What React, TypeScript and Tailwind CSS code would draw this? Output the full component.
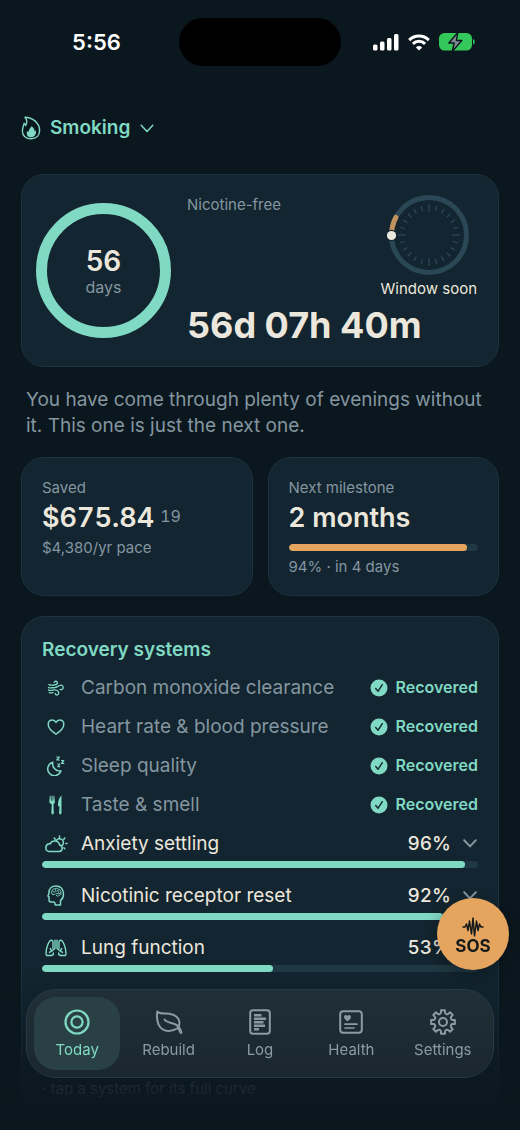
import React from "react";
import clsx from "clsx";

type IconProps = { className?: string };

const stroke = {
  fill: "none",
  stroke: "currentColor",
  strokeLinecap: "round" as const,
  strokeLinejoin: "round" as const,
};

function FlameIcon({ className }: IconProps) {
  return (
    <svg viewBox="0 0 20 24" className={className} {...stroke} strokeWidth="1.4">
      <path d="M4 1.2C11 1.2 18.6 6.6 18.6 14.6c0 5-3.4 8.2-8.6 8.2-5 0-8.6-3-8.6-7.6 0-3.400 1-5.600 1.800-7.900.7.6 1.200 1.300 1.500 2.300C6 7.200 6.200 3.800 4 1.200z" />
      <path d="M10.400 10.200c2.200 1.400 3.300 3 3.100 5 .4-.2.700-.7.900-1.200 1.600 3.400-.2 7.200-4.400 7.200-3.600 0-5.200-3.100-3.800-6.300.3.600.7 1 1.200 1.200.2-2.300 1.900-3.900 3-5.900z" fill="currentColor" stroke="none" />
    </svg>
  );
}

function Chevron({ className, width }: IconProps & { width: number }) {
  return (
    <svg viewBox="0 0 14 9" className={className} {...stroke} strokeWidth={width}>
      <path d="M1.200 1.200L7 7.400l5.800-6.200" />
    </svg>
  );
}

function WindIcon({ className }: IconProps) {
  return (
    <svg viewBox="0 0 20 18" className={className} {...stroke} strokeWidth="1.500">
      <path d="M2 5.200c2 1 4 .4 6 .4 2.200 0 3.600-.9 3.600-2.400a1.900 1.900 0 0 0-3.700-.5" />
      <path d="M1.500 8.500c2.500 1 4.500 0 7 0 3 0 4-2.500 7-2.700a2.500 2.500 0 1 1-.9 4.800" />
      <path d="M1.500 11.300c2.500 1 5-.300 7.500-.1 2.200.2 4 1.700 4 3.600a2 2 0 0 1-4 .2" />
      <path d="M2.500 14.200c1.500.6 2.700.2 4-.1" />
    </svg>
  );
}

function HeartIcon({ className }: IconProps) {
  return (
    <svg viewBox="0 0 18 18" className={className} {...stroke} strokeWidth="1.500">
      <path d="M9 16.200C4.500 13.300 1.200 10 1.200 6.300 1.200 3.700 3 1.900 5.200 1.900c1.700 0 3 .9 3.800 2.400.8-1.500 2.100-2.400 3.800-2.400 2.200 0 4 1.800 4 4.400 0 3.700-3.300 7-7.800 9.900z" />
    </svg>
  );
}

function SleepIcon({ className }: IconProps) {
  return (
    <svg viewBox="0 0 18 20" className={className} {...stroke} strokeWidth="1.500">
      <path d="M5.800 6.300A6.800 6.800 0 1 0 14 15 7.200 7.200 0 0 1 5.800 6.300z" />
      <path d="M9.800 1h2.500L9.800 4h2.500M14.500 4.500h2.300l-2.300 2.800h2.300M10.800 8h2l-2 2.600h2" strokeWidth="1.200" />
    </svg>
  );
}

function ForkKnifeIcon({ className }: IconProps) {
  return (
    <svg viewBox="0 0 14 20" className={className} fill="currentColor">
      <path d="M.8.700h.8l.3 5h.6l.1-5h.9l.1 5h.6l.3-5h.8l.6 5.900c.1 1.500-.6 2.300-1.400 2.700l.3 8.700c0 .8-.5 1.400-1.200 1.400s-1.200-.6-1.200-1.400l.3-8.700C1.600 8.900.200 8.100.3 6.600z" />
      <path d="M12.500.600v17.400c0 .8-.5 1.400-1.200 1.400s-1.200-.6-1.200-1.400l.3-6.300c-.9-.3-1.500-.8-1.500-1.600C9 6.500 10.100 2.400 12.500.600z" />
    </svg>
  );
}

function CloudSunIcon({ className }: IconProps) {
  return (
    <svg viewBox="0 0 24 18" className={className} {...stroke} strokeWidth="1.500">
      <path d="M5 16.500h10.200a3.300 3.300 0 0 0 .4-6.500 5 5 0 0 0-9.400-1.200A3.900 3.900 0 0 0 5 16.500z" />
      <path d="M12.200 5.900a3.800 3.800 0 1 1 5.900 4.500" />
      <path d="M15.500 1v1.500M10.200 3.100l1 1M20.800 3.100l-1 1M21.800 8.500H23M19.900 12.800l.9.900" />
    </svg>
  );
}

function BrainHeadIcon({ className }: IconProps) {
  return (
    <svg viewBox="0 0 18 21" className={className} {...stroke} strokeWidth="1.500">
      <path d="M13.500 20v-4.400c2-1.600 3-3.800 3-6.700C16.500 4 13.300.9 9 .9c-4.400 0-7 2.700-7 6.500 0 1-.1 1.600-.9 3.100-.3.700 0 1.100.9 1.200v3.400c0 1.300.6 1.800 1.700 1.800H6.500c.8 0 1.200.3 1.400 1L8.200 20z" />
      <path d="M5.300 9.200C3.900 8.500 4 6.400 5.300 5.900 5.300 4.200 7 3.200 8.200 3.900c1.200-1.100 3.300-.6 3.600.7 1.600 0 2.500 1.500 2 2.800.7 1.200-.1 2.900-1.600 2.900-.7 1-2.200 1-2.900.1M5.300 9.200c1.100.8 2.300.6 3-.3M5.500 6.200c.6.900 1.800 1 2.700.4.800-.6.900-1.500.2-2.400M9.500 8.700c1.700.1 2.400-.8 2.200-1.900M11.500 4.900c-.8.100-1.300.6-1.400 1.300M11.600 8.800c.9-.1 1.500-.4 2-.9" strokeWidth="1" />
    </svg>
  );
}

function LungsIcon({ className }: IconProps) {
  return (
    <svg viewBox="0 0 22 18" className={className} {...stroke} strokeWidth="1.400">
      <path d="M10 1.200v8.300L6.800 12M12 1.200v8.300l3.200 2.500" />
      <path d="M8 9.500V3.300C8 2 7.300 1.200 6.300 1.200 4 1.200 1 9 1 14.500c0 1.600.6 2.200 2 2h3.200c1.500 0 2.200-.9 2.200-2.500" />
      <path d="M14 9.500V3.300c0-1.300.7-2.100 1.700-2.100C18 1.200 21 9 21 14.500c0 1.600-.6 2.200-2 2h-3.200c-1.500 0-2.200-.9-2.200-2.500" />
      <path d="M5.200 9.500l1.600 2.500-2.300 1.400M16.800 9.500l-1.600 2.500 2.300 1.400" />
    </svg>
  );
}

function CheckBadge() {
  return (
    <svg viewBox="0 0 18 18" className="size-[18px]" aria-hidden="true">
      <circle cx="9" cy="9" r="8.500" fill="#80d9c3" />
      <path d="M5.700 9.500l2.400 2.700 4.200-6.500" fill="none" stroke="#132530" strokeWidth="1.400" strokeLinecap="round" strokeLinejoin="round" />
    </svg>
  );
}

function TargetIcon({ className }: IconProps) {
  return (
    <svg viewBox="0 0 26 26" className={className} {...stroke} strokeWidth="2.200">
      <circle cx="13" cy="13" r="11.500" />
      <circle cx="13" cy="13" r="5.600" />
    </svg>
  );
}

function LeafIcon({ className }: IconProps) {
  return (
    <svg viewBox="0 0 28 26" className={className} {...stroke} strokeWidth="2">
      <path d="M2.200 2.500c2.500 3 6.800 1.600 12 2.200 6 .7 10.300 4.500 10.300 9 0 2.200-.7 4-1.800 5.300-6.200 4.500-13.400 4-17.500-.8C1.800 14 1.600 8 2.200 2.500z" />
      <path d="M9.500 10.500c2.500 3.300 6.500 3 10 4.500 3.200 1.200 5.500 4.200 6.500 8" />
      <path d="M24 19.500l2 4" strokeWidth="2.800" />
    </svg>
  );
}

function LogIcon({ className }: IconProps) {
  return (
    <svg viewBox="0 0 22 26" className={className} {...stroke} strokeWidth="2">
      <rect x="1.200" y="1.200" width="19.600" height="23.600" rx="2.800" />
      <path d="M5 6.200h7.500M5 9.700h12M5 13.200h9.500M5 16.700h11M5 20.200h5" strokeWidth="2.500" strokeLinecap="butt" />
    </svg>
  );
}

function HealthIcon({ className }: IconProps) {
  return (
    <svg viewBox="0 0 24 24" className={className} {...stroke} strokeWidth="2">
      <rect x="1.200" y="1.200" width="21.600" height="21.600" rx="3" />
      <path d="M8.500 11.200C6.300 9.600 5 8.300 5 6.900c0-2.100 2.500-2.600 3.500-.9 1-1.700 3.500-1.200 3.500.9 0 1.400-1.300 2.700-3.500 4.300z" fill="currentColor" stroke="none" />
      <path d="M6 14.200h12M6 18h9" strokeWidth="1.700" />
    </svg>
  );
}

// Eight rounded teeth around a small hub
function gearPath() {
  const points: string[] = [];
  const teeth = 8;
  for (let i = 0; i < teeth; i++) {
    const base = (i * 2 * Math.PI) / teeth - Math.PI / 2;
    const steps: [number, number][] = [[-0.22, 9.6], [-0.16, 12], [0.16, 12], [0.22, 9.6]];
    steps.forEach(([offset, r]) => {
      const x = (13 + r * Math.cos(base + offset)).toFixed(2);
      const y = (13 + r * Math.sin(base + offset)).toFixed(2);
      points.push(`${x} ${y}`);
    });
  }
  let d = `M${points[0]}`;
  for (let i = 1; i < points.length; i++) {
    d += i % 4 === 0 ? `A2 2 0 0 0 ${points[i]}` : `L${points[i]}`;
  }
  return d + `A2 2 0 0 0 ${points[0]}Z`;
}

function GearIcon({ className }: IconProps) {
  return (
    <svg viewBox="0 0 26 26" className={className} {...stroke} strokeWidth="2">
      <path d={gearPath()} />
      <circle cx="13" cy="13" r="4" />
    </svg>
  );
}

function StatusBar() {
  return (
    <div className="grid grid-cols-[1fr_162px_1fr] items-center pt-[18px]">
      <span className="pl-[14px] text-center text-[22px] leading-6 font-semibold text-white">5:56</span>
      <div className="h-12 rounded-full bg-black" />
      <div className="flex items-center gap-[9px] pl-8">
        <svg viewBox="0 0 26 17" className="h-[17px] w-[26px]" fill="white">
          <rect x="0" y="10.500" width="4.500" height="6" rx="1.500" />
          <rect x="7" y="7.500" width="4.500" height="9" rx="1.500" />
          <rect x="14" y="4" width="4.500" height="12.500" rx="1.500" />
          <rect x="21" y="0" width="4.500" height="16.500" rx="1.500" />
        </svg>
        <svg viewBox="0 0 22 17" className="h-[17px] w-[22px]" fill="none" stroke="white" strokeWidth="3">
          <path d="M1.200 6.100a14 14 0 0 1 19.600 0" />
          <path d="M4.900 9.800a8.800 8.800 0 0 1 12.200 0" />
          <path d="M11 16.500l-3.100-3.100a4.400 4.400 0 0 1 6.200 0z" fill="white" stroke="none" />
        </svg>
        <svg viewBox="0 0 36 18" className="h-[18px] w-9">
          <rect width="33" height="17.500" rx="5.500" fill="#34c759" />
          <path d="M34 6c2.200.7 2.200 4.700 0 5.500z" fill="#34c759" />
          <path d="M18.800-.5L9.800 10h5.400l-2 8.500L22.800 7.500h-5.400z" fill="#7f8b91" stroke="#0b171e" strokeWidth="1.400" strokeLinejoin="round" />
        </svg>
      </div>
    </div>
  );
}

function DayRing() {
  return (
    <div className="relative size-[135px] shrink-0">
      <svg viewBox="0 0 135 135" className="size-full">
        <circle cx="67.500" cy="67.500" r="62" fill="none" stroke="#80d9c3" strokeWidth="11" />
      </svg>
      <div className="absolute inset-0 flex flex-col items-center justify-center">
        <span className="text-[28px] leading-8 font-semibold">56</span>
        <span className="text-[16px] leading-5 text-[#8496a0]">days</span>
      </div>
    </div>
  );
}

function WindowDial() {
  const ticks = Array.from({ length: 24 }, (_, i) => i);
  return (
    <svg viewBox="1 1 80 80" className="size-20 overflow-visible">
      <circle cx="41" cy="41" r="37.500" fill="none" stroke="#2a4756" strokeWidth="5" />
      {ticks.map((i) => (
        <line
          key={i}
          x1="41"
          x2="41"
          y1={i % 6 === 0 ? 10 : 11}
          y2={i % 6 === 0 ? 18 : 16}
          stroke="#2d4a59"
          strokeWidth="1.200"
          transform={`rotate(${i * 15} 41 41)`}
        />
      ))}
      <path d="M3.500 41A37.500 37.500 0 0 1 7.900 23.400" fill="none" stroke="#c1935c" strokeWidth="5" strokeLinecap="round" />
      <circle cx="3.500" cy="41.500" r="5.700" fill="#132530" />
      <circle cx="3.500" cy="41.500" r="4.600" fill="#ece7dc" />
    </svg>
  );
}

function Bar({ value, className }: { value: number; className: string }) {
  return (
    <div className="h-[7px] overflow-hidden rounded-full bg-[#203844]">
      <div className={clsx("h-full rounded-full", className)} style={{ width: `${value}%` }} />
    </div>
  );
}

const card = "rounded-[23px] border border-[#1d333f] bg-[#132530]";

const recovered = [
  { name: "Carbon monoxide clearance", icon: <WindIcon className="h-4 w-[18px]" /> },
  { name: "Heart rate & blood pressure", icon: <HeartIcon className="size-[18px]" /> },
  { name: "Sleep quality", icon: <SleepIcon className="h-5 w-[18px]" /> },
  { name: "Taste & smell", icon: <ForkKnifeIcon className="h-5 w-[14px]" /> },
];

const healing = [
  { name: "Anxiety settling", value: 97, label: "96%", icon: <CloudSunIcon className="h-[18px] w-6" /> },
  { name: "Nicotinic receptor reset", value: 92, label: "92%", icon: <BrainHeadIcon className="h-[21px] w-[18px]" /> },
  { name: "Lung function", value: 53, label: "53%", icon: <LungsIcon className="h-[18px] w-[22px]" /> },
];

const tabs = [
  { name: "Today", icon: <TargetIcon className="size-[26px]" /> },
  { name: "Rebuild", icon: <LeafIcon className="h-[26px] w-7" /> },
  { name: "Log", icon: <LogIcon className="h-[26px] w-[22px]" /> },
  { name: "Health", icon: <HealthIcon className="size-6" /> },
  { name: "Settings", icon: <GearIcon className="size-[26px]" /> },
];

export default function App() {
  return (
    <div className="min-h-screen bg-[#0b171e] pb-[14px] font-['Inter',sans-serif] text-[#ece7dc]">
      <StatusBar />

      <main className="px-[21px]">
        <button className="mt-[50px] flex items-center text-[19px] leading-6 font-semibold text-[#80d9c3]">
          <FlameIcon className="mr-[9px] h-6 w-5" />
          Smoking
          <Chevron className="ml-[10px] h-[9px] w-[14px]" width={1.5} />
        </button>

        <section className={clsx(card, "mt-[34px] flex items-center gap-4 py-5 pr-[21px] pl-[14px]")}>
          <DayRing />
          <div className="min-w-0 flex-1">
            <div className="flex items-start justify-between">
              <span className="text-[15px] leading-5 text-[#8496a0]">Nicotine-free</span>
              <div className="flex flex-col items-center gap-1">
                <WindowDial />
                <span className="text-[15px] leading-5">Window soon</span>
              </div>
            </div>
            <div className="mt-[5px] text-[36px] leading-[42px] font-bold whitespace-nowrap">56d 07h 40m</div>
          </div>
        </section>

        <p className="mx-[5px] mt-5 text-[19px] leading-[26px] text-[#8496a0]">
          You have come through plenty of evenings without it. This one is just the next one.
        </p>

        <div className="mt-[18px] grid grid-cols-2 gap-[15px]">
          <section className={clsx(card, "px-5 py-5")}>
            <h2 className="text-[15px] leading-5 text-[#8496a0]">Saved</h2>
            <div className="mt-1 flex items-start gap-[6px]">
              <span className="text-[27px] leading-8 font-semibold tabular-nums">$675.84</span>
              <span className="pt-1 text-[16px] leading-5 text-[#8496a0] tabular-nums">19</span>
            </div>
            <p className="mt-1 text-[15px] leading-5 text-[#8496a0]">$4,380/yr pace</p>
          </section>
          <section className={clsx(card, "px-5 pt-5 pb-[18px]")}>
            <h2 className="text-[15px] leading-5 text-[#8496a0]">Next milestone</h2>
            <div className="mt-1 mb-[10px] text-[27px] leading-8 font-semibold">2 months</div>
            <Bar value={94} className="bg-[#e5a55f]" />
            <p className="mt-[6px] text-[15px] leading-5 text-[#8496a0]">94% · in 4 days</p>
          </section>
        </div>

        <section className={clsx(card, "mt-5 px-5 pt-[21px] pb-4")}>
          <h2 className="text-[19px] leading-6 font-semibold text-[#80d9c3]">Recovery systems</h2>
          <ul className="mt-[14px] flex flex-col gap-4">
            {recovered.map((item) => (
              <li key={item.name} className="flex h-[23px] items-center text-[19px] leading-[23px] text-[#8496a0]">
                <span className="mr-[11px] flex w-7 justify-center text-[#80d9c3]">{item.icon}</span>
                <span className="flex-1">{item.name}</span>
                <span className="flex items-center gap-2 text-[16px] font-semibold text-[#80d9c3]">
                  <CheckBadge />
                  Recovered
                </span>
              </li>
            ))}
            {healing.map((item) => (
              <li key={item.name}>
                <button className="mb-[6px] flex h-[23px] w-full items-center text-left text-[19px] leading-[23px]">
                  <span className="mr-[11px] flex w-7 justify-center text-[#80d9c3]">{item.icon}</span>
                  <span className="flex-1">{item.name}</span>
                  <span className="font-medium tabular-nums">{item.label}</span>
                  <Chevron className="mr-[1px] ml-3 h-[9px] w-[14px] text-[#8496a0]" width={2} />
                </button>
                <Bar value={item.value} className="bg-[#80d9c3]" />
              </li>
            ))}
          </ul>
          <p className="mt-[107px] text-[15px] leading-5 text-[#8496a0]">· tap a system for its full curve</p>
        </section>
      </main>

      <button className="fixed right-[11px] bottom-[160px] flex size-[72px] flex-col items-center justify-center rounded-full bg-[#e5a55f] text-[#14191b] shadow-[0_4px_16px_rgba(0,0,0,0.3)]">
        <svg viewBox="0 0 22 20" className="mt-1 h-5 w-[22px]" {...stroke} strokeWidth="1.500">
          <path d="M1 10h2l1.500-3L6 13.500 7.500 4l2 13L11 1l1.500 18L14.500 4 16 13.500 17.500 7 19 10h2" />
        </svg>
        <span className="text-[17px] leading-[18px] font-bold">SOS</span>
      </button>

      <div className="pointer-events-none fixed inset-x-0 bottom-0 h-40 bg-linear-to-b from-transparent via-[#0b171e]/85 via-70% to-[#0b171e]" />

      <nav className="fixed inset-x-[26px] bottom-[52px] grid grid-cols-5 gap-[5px] rounded-[30px] border border-[#233b47] bg-linear-to-b from-[#212f37] to-[#1a272f] p-[7px]">
        {tabs.map((tab) => (
          <button
            key={tab.name}
            className={clsx(
              "flex h-[73px] flex-col items-center justify-center gap-1 rounded-[22px] text-[15px] leading-5",
              tab.name === "Today" ? "bg-[#294044] text-[#80d9c3]" : "text-[#8b9ba4]"
            )}
          >
            <span className="flex h-7 items-center">{tab.icon}</span>
            {tab.name}
          </button>
        ))}
      </nav>
    </div>
  );
}
